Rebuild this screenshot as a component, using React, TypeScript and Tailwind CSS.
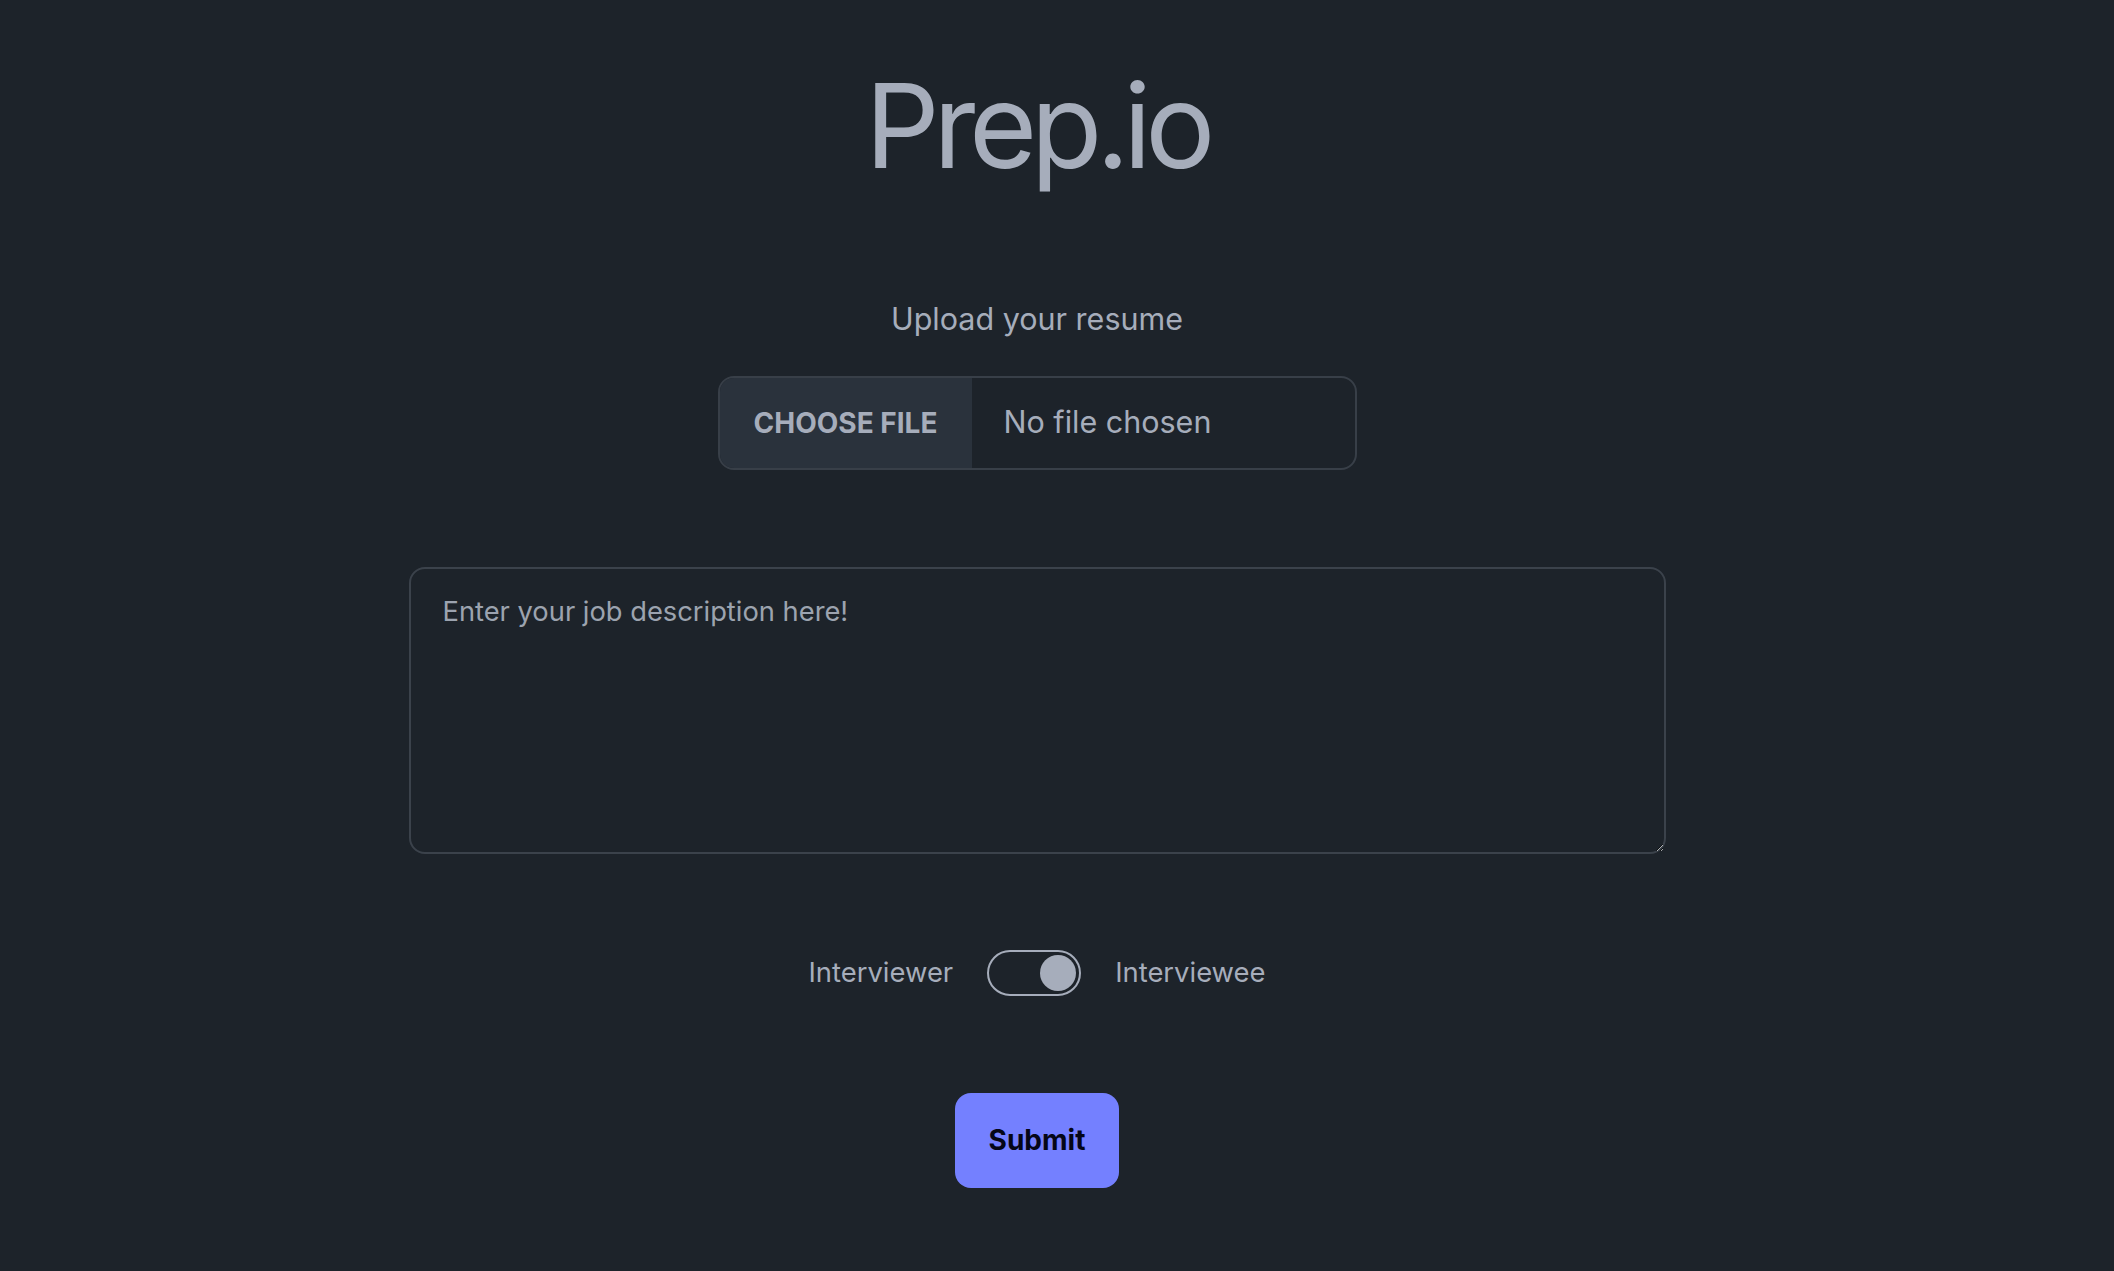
export default function App() {
  return (
    <div
      className="min-h-screen w-full bg-[#1d232a] text-[#a6adbb]"
      style={{ fontFamily: "Inter, 'Noto Sans', sans-serif" }}
    >
      <div className="flex flex-col items-center pr-[40px]">
        {/* Title */}
        <h1 className="mt-[67px] text-[117px] leading-none tracking-[-0.055em] font-normal">
          Prep.io
        </h1>

        {/* Resume upload */}
        <p className="mt-[120px] text-[30.5px] leading-none">Upload your resume</p>
        <label className="mt-[41px] flex h-[94px] w-[639px] cursor-pointer overflow-hidden rounded-[16px] border-2 border-[#383f48]">
          <span className="flex w-[252px] items-center justify-center bg-[#2a323c] text-[28px] font-bold uppercase leading-none">
            Choose file
          </span>
          <span className="flex items-center pl-[32px] text-[30.5px] leading-none">No file chosen</span>
          <input type="file" className="hidden" />
        </label>

        {/* Job description */}
        <textarea
          placeholder="Enter your job description here!"
          className="mt-[97px] h-[287px] w-[1257px] rounded-[16px] border-2 border-[#3b424b] bg-transparent px-[32px] pt-[23px] text-[27.3px] leading-[40px] text-[#a6adbb] outline-none placeholder:text-[#9ca3af]"
        />

        {/* Role toggle */}
        <div className="mt-[96px] flex items-center gap-[34px] text-[27.4px] leading-none">
          <span>Interviewer</span>
          <div className="flex h-[46px] w-[94px] items-center justify-end rounded-full border-2 border-[#a6adbb] pr-[3px]">
            <div className="h-[36px] w-[36px] rounded-full bg-[#a6adbb]" />
          </div>
          <span>Interviewee</span>
        </div>

        {/* Submit */}
        <button className="mt-[97px] flex h-[95px] w-[164px] items-center justify-center rounded-[16px] bg-[#7480ff] text-[28px] font-bold text-[#050617]">
          Submit
        </button>
      </div>
    </div>
  );
}
